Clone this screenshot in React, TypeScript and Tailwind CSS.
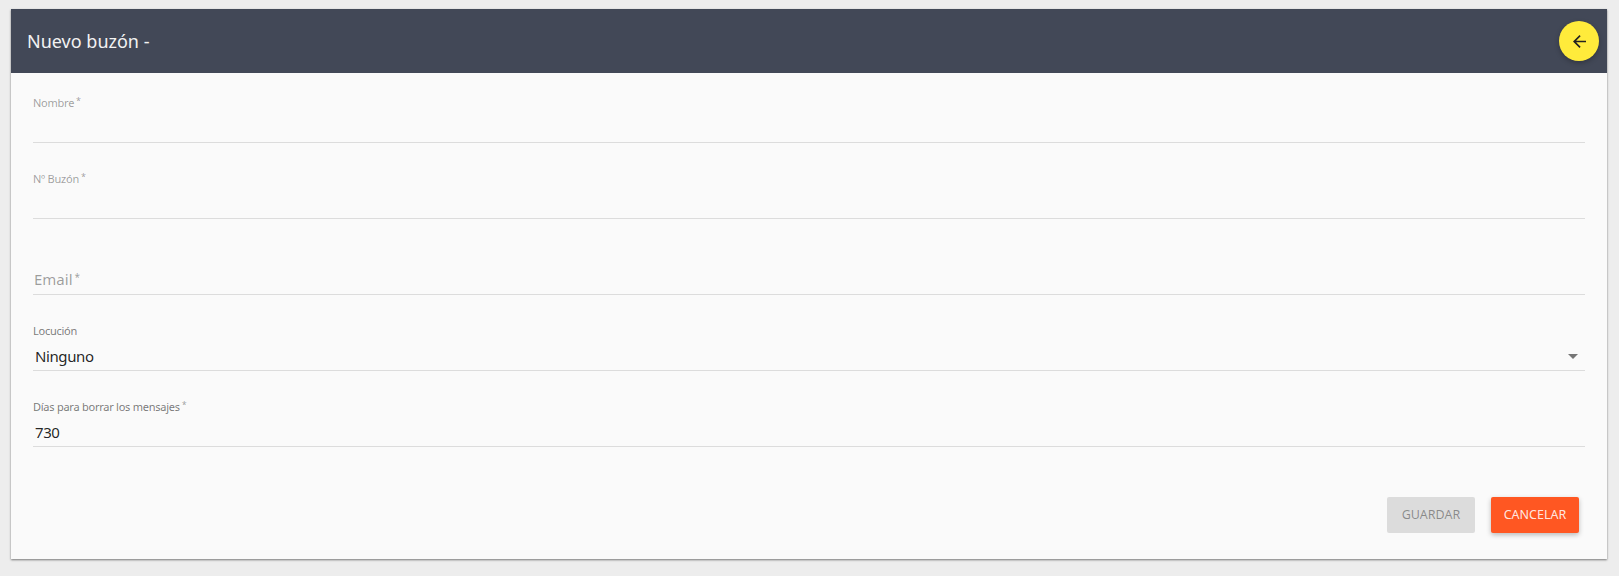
import React from 'react';

const fontStack = 'font-["Noto_Sans",sans-serif]';

interface FieldProps {
  label?: string;
  required?: boolean;
  value?: string;
  placeholder?: string;
  select?: boolean;
}

const Field: React.FC<FieldProps> = ({ label, required, value, placeholder, select }) => (
  <div className="relative h-[70px] flex flex-col justify-end">
    {label && (
      <label className="absolute left-0 top-[22px] text-[11px] leading-[16px] text-[#00000061] tracking-[-0.25px]">
        <span className={value ? 'text-[#00000089]' : ''}>{label}</span>
        {required && <span className="relative -top-[3px] ml-[2px] text-[9px]">*</span>}
      </label>
    )}
    <div className="h-[32px] border-b border-[#dcdcdc] flex items-center justify-between pl-[2px] pt-[3px]">
      {placeholder ? (
        <span className="text-[15px] text-[#00000061] -ml-[1px] -mt-[2px]">
          {placeholder}
          <span className="relative -top-[4px] ml-[2px] text-[10px]">*</span>
        </span>
      ) : (
        <span className="text-[15px] text-[#000000de] tracking-[-0.4px]">{value}</span>
      )}
      {select && (
        <svg width="10" height="5" viewBox="0 0 10 5" className="mr-[7px]">
          <path d="M0 0 L10 0 L5 5 Z" fill="#757575" />
        </svg>
      )}
    </div>
  </div>
);

export default function App() {
  return (
    <div className={`h-[576px] bg-[#ededed] pt-[9px] pl-[11px] overflow-hidden ${fontStack}`}>
      <div className="relative w-[1596px] h-[550px] bg-[#fafafa] shadow-[0_1px_2px_rgba(0,0,0,0.5)]">
        <div className="h-[64px] bg-[#424857] flex items-center pl-[16px]">
          <h1 className="text-[18px] text-[#f2f2f2] font-normal">Nuevo buzón -</h1>
        </div>
        <button className="absolute top-[12px] right-[8px] w-[40px] h-[40px] rounded-full bg-[#ffeb3b] flex items-center justify-center shadow-[0_2px_5px_rgba(0,0,0,0.26)]">
          <svg width="13" height="13" viewBox="0 0 16 16" fill="#212121">
            <path d="M16 7H3.83l5.59-5.59L8 0 0 8l8 8 1.41-1.41L3.83 9H16z" />
          </svg>
        </button>

        <form className="pl-[22px] pr-[22px] flex flex-col gap-[6px]">
          <Field label="Nombre" required />
          <Field label="Nº Buzón" required />
          <Field placeholder="Email" />
          <Field label="Locución" value="Ninguno" select />
          <Field label="Días para borrar los mensajes" required value="730" />
          <div className="flex justify-end gap-[16px] pt-[44px] pr-[6px]">
            <button type="button" className="w-[88px] h-[36px] rounded-[2px] bg-[#dcdcdc] text-[12.5px] text-[#00000061]">GUARDAR</button>
            <button type="button" className="w-[88px] h-[36px] rounded-[2px] bg-[#ff5722] text-[12.5px] text-[#ffffffde] shadow-[0_2px_5px_rgba(0,0,0,0.26)]">CANCELAR</button>
          </div>
        </form>
      </div>
    </div>
  );
}
